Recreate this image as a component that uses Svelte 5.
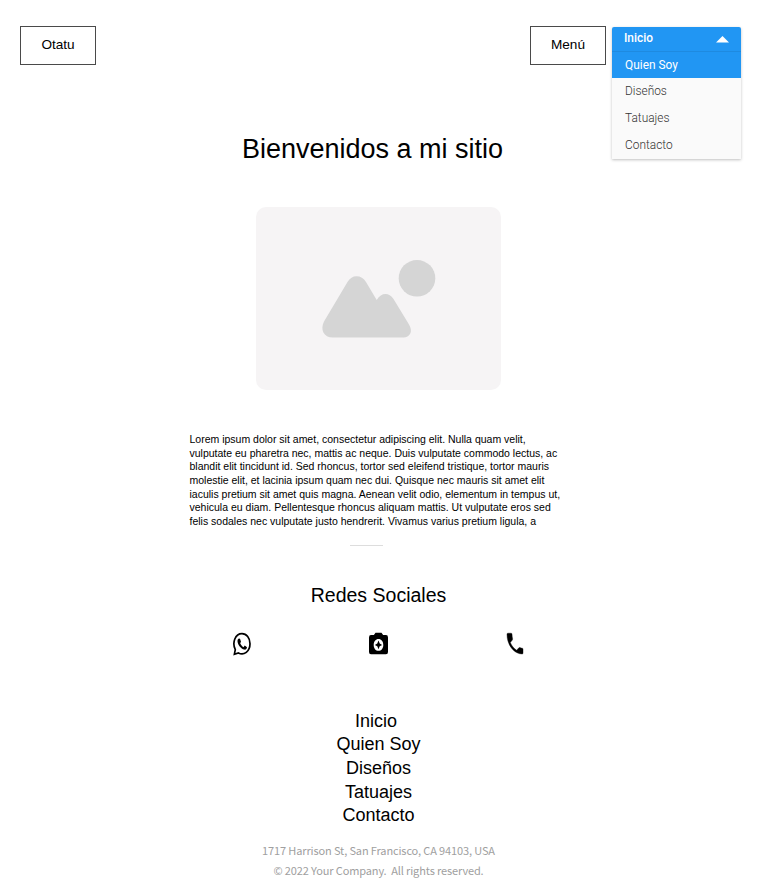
<script>
  const pages = ['Inicio', 'Quien Soy', 'Diseños', 'Tatuajes', 'Contacto'];
  const options = pages.slice(1);
  const lines = [
    'Lorem ipsum dolor sit amet, consectetur adipiscing elit. Nulla quam velit,',
    'vulputate eu pharetra nec, mattis ac neque. Duis vulputate commodo lectus, ac',
    'blandit elit tincidunt id. Sed rhoncus, tortor sed eleifend tristique, tortor mauris',
    'molestie elit, et lacinia ipsum quam nec dui. Quisque nec mauris sit amet elit',
    'iaculis pretium sit amet quis magna. Aenean velit odio, elementum in tempus ut,',
    'vehicula eu diam. Pellentesque rhoncus aliquam mattis. Ut vulputate eros sed',
    'felis sodales nec vulputate justo hendrerit. Vivamus varius pretium ligula, a'
  ];
</script>

<div class="page">
  <header>
    <div class="box">Otatu</div>
    <div class="right">
      <div class="box">Menú</div>
      <div class="select">
        <div class="current">
          <span>Inicio</span>
          <svg width="13" height="7" viewBox="0 0 13 7"><path d="M0 6.5L6.5 0L13 6.5Z" fill="#fff" /></svg>
        </div>
        {#each options as option, i}
          <div class="option" class:active={i === 0}>{option}</div>
        {/each}
      </div>
    </div>
  </header>

  <h1>Bienvenidos a mi sitio</h1>

  <div class="picture">
    <svg width="245" height="183" viewBox="0 0 245 183" fill="#d5d5d5">
      <circle cx="161" cy="71.3" r="18.3" />
      <path d="M91.5 75Q95 69.300 100.5 69.300Q106.500 69.300 110 75L120.700 92.900Q124.500 87 129.500 87Q134 87 137.500 92L153 117.500C157.500 125 153.500 130.500 147.500 130.500H77C67.500 130.500 64 122.500 68 114.500Z" />
    </svg>
  </div>

  <div class="copy">
    {#each lines as line}
      <div>{line}</div>
    {/each}
  </div>

  <hr />

  <h2>Redes Sociales</h2>

  <div class="social">
    <svg width="20" height="26" viewBox="0 0 20 26">
      <path d="M2.400 23.200L3.300 18.600C-.2 11.500 3.300 2.700 10 2.700C14.500 2.700 18 7 18 12.700C18 20.300 11.900 25 6.400 21.900Z" fill="none" stroke="#000" stroke-width="1.700" />
      <path d="M6.900 7.500L8 7.700L9 10.700L8.200 12.200C9 14 10 15.300 11.500 16.200L12.700 14.600L15 16.200C14.800 18 13.700 18.900 12.300 18.600C8.900 17.900 5.700 13.900 5.500 10.300C5.500 9 6 7.800 6.900 7.500Z" />
    </svg>
    <svg width="20" height="26" viewBox="0.5 0 20 26">
      <path fill-rule="evenodd" d="M7 1.800H13L14.600 4.100H17.500Q19.500 4.100 19.500 6.500V21Q19.500 23.300 17.500 23.300H2.500Q.5 23.300 .5 21V6.500Q.5 4.100 2.500 4.100H5.400ZM10 8C7.200 8 5.200 10.600 5.200 13.900S7.200 19.800 10 19.800S14.800 17.200 14.800 13.900S12.800 8 10 8Z" />
      <path d="M10 9.600L11.200 12.500L13.600 13.900L11.200 15.300L10 18.200L8.800 15.300L6.400 13.900L8.800 12.500Z" />
    </svg>
    <svg width="20" height="26" viewBox="0 0 20 26">
      <path d="M2.900 2.200H6.100Q7 2.200 7 3.300Q7.100 5.700 7.600 7.700Q7.700 8.500 7.300 9.100L5.300 11.500C6.800 15 8.900 17.600 11.700 19.300L13.700 16.900Q14.200 16.300 14.900 16.600Q16.400 17.200 17.200 17.200Q18 17.200 18 18.300V22Q18 23 17.200 23C9.200 23 2 14.200 2 3.300Q2 2.200 2.900 2.200Z" stroke="#000" stroke-width=".4" />
    </svg>
  </div>

  <nav>
    {#each pages as page}
      <div>{page}</div>
    {/each}
  </nav>

  <footer>
    <div>1717 Harrison St, San Francisco, CA 94103, USA</div>
    <div>© 2022 Your Company.&nbsp; All rights reserved.</div>
  </footer>
</div>

<style>
  :global(body) { background: #fff; }
  .page {
    box-sizing: border-box;
    width: 757px;
    height: 896px;
    padding-top: 26px;
    display: flex;
    flex-direction: column;
    align-items: center;
    overflow: hidden;
    color: #000;
    font-family: "Liberation Sans", Arial, sans-serif;
  }
  header {
    box-sizing: border-box;
    width: 100%;
    height: 134px;
    padding: 0 16px 0 20px;
    display: flex;
    justify-content: space-between;
    align-items: flex-start;
  }
  .right { display: flex; align-items: flex-start; gap: 6px; }
  .box {
    box-sizing: border-box;
    width: 76px;
    height: 39px;
    border: 1px solid #4a4a4a;
    text-align: center;
    font-size: 13.600px;
    line-height: 35px;
  }
  .select {
    width: 129px;
    margin-top: 1px;
    border-radius: 2px 2px 0 0;
    background: #fafafa;
    box-shadow: 0 1px 3px rgba(0, 0, 0, 0.25);
    font-family: Roboto, sans-serif;
    font-size: 11.900px;
    overflow: hidden;
  }
  .current {
    box-sizing: border-box;
    height: 25px;
    padding: 0 12px;
    display: flex;
    justify-content: space-between;
    background: #2196f3;
    border-bottom: 1px solid #1e8ae0;
    color: #fff;
    font-weight: 500;
    line-height: 22px;
  }
  .current svg { margin-top: 9px; }
  .option {
    height: 27px;
    padding-left: 13px;
    color: #333;
    font-weight: 300;
    line-height: 27px;
  }
  .active {
    height: 26px;
    background: #2196f3;
    color: #fff;
    font-weight: 400;
    line-height: 26px;
  }
  h1, h2 { margin: 0; font-weight: 400; }
  h1 { margin: -27px 12px 0 0; font-size: 27px; line-height: 32px; }
  .picture {
    width: 245px;
    height: 183px;
    margin-top: 42px;
    border-radius: 10px;
    background: #f6f4f5;
  }
  .picture svg { display: block; }
  .copy {
    width: 378px;
    margin-top: 43px;
    font-size: 10.500px;
    line-height: 13.670px;
    white-space: nowrap;
  }
  hr { width: 33px; height: 1px; margin: 16px 0 0 -24px; border: 0; background: #ddd; }
  h2 { margin-top: 37px; font-size: 19.500px; line-height: 24px; }
  .social { width: 293px; margin-top: 24px; display: flex; justify-content: space-between; }
  nav { margin-top: 53px; text-align: center; font-size: 18px; line-height: 23.640px; }
  nav div:first-child { padding-right: 5px; }
  footer {
    margin-top: 12px;
    color: #a0a0a0;
    text-align: center;
    font-family: "Noto Sans CJK SC", sans-serif;
    font-size: 11px;
    letter-spacing: -0.130px;
    line-height: 20px;
  }
</style>
